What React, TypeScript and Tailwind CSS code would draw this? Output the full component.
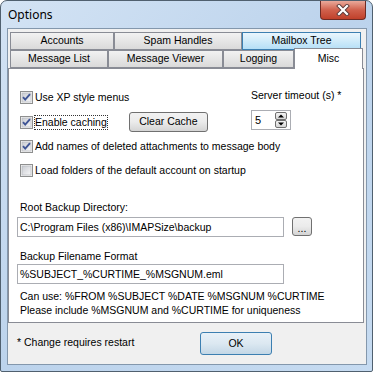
function CheckBox({ checked }: { checked: boolean }) {
  return (
    <svg width="13" height="13" viewBox="0 0 13 13" className="shrink-0">
      <defs>
        <linearGradient id="cbg" x1="0" y1="0" x2="1" y2="1">
          <stop offset="0" stopColor="#c9ccd2" />
          <stop offset="1" stopColor="#f7f7f8" />
        </linearGradient>
      </defs>
      <rect x="0.5" y="0.5" width="12" height="12" fill="#f4f4f4" stroke="#8e8f8f" />
      <rect x="2" y="2" width="9" height="9" fill="url(#cbg)" stroke="#b0b3b9" strokeWidth="0.6" />
      {checked && (
        <path d="M3 6.2 L5.2 8.6 L10 3.2" fill="none" stroke="#3f5595" strokeWidth="1.9" />
      )}
    </svg>
  );
}

function Tab({ label, w, hover }: { label: string; w: string; hover?: boolean }) {
  return (
    <div
      className={`${w} h-[18px] flex items-center justify-center border ${
        hover
          ? "border-[#3c7fb1] bg-gradient-to-b from-[#eaf6fd] to-[#b5dff6]"
          : "border-[#898c95] bg-gradient-to-b from-[#f2f2f2] to-[#dadada]"
      }`}
    >
      {label}
    </div>
  );
}

function Row({ label, checked, focus }: { label: string; checked: boolean; focus?: boolean }) {
  return (
    <div className="h-[24px] flex items-center">
      <CheckBox checked={checked} />
      <span
        className={`ml-[1px] leading-[13px] border ${
          focus ? "border-dotted border-[#333]" : "border-transparent"
        }`}
      >
        {label}
      </span>
    </div>
  );
}

export default function App() {
  return (
    <div className="w-[373px] h-[372px] bg-white font-['Liberation_Sans',Arial,sans-serif] text-[10.5px] text-black">
      <div className="w-full h-full flex flex-col rounded-t-[7px] rounded-b-[2px] border border-[#50606f] bg-gradient-to-br from-[#d3e3f4] via-[#bcd3ec] to-[#c6dbf1]">
        {/* title bar */}
        <div className="h-[27px] flex items-start pl-[7px]">
          <span className="mt-[6px] text-[12px] leading-[16px] font-['Noto_Sans',sans-serif]">Options</span>
          <div className="ml-auto mr-[6px] w-[46px] h-[19px] rounded-b-[4px] border border-t-0 border-[#6e2b24] bg-gradient-to-b from-[#e9a99b] via-[#d0604c] to-[#c0402a] flex items-center justify-center">
            <svg width="14" height="12" viewBox="0 0 14 12">
              <path d="M3 2 L11 10 M11 2 L3 10" stroke="#5a3a3a" strokeWidth="4" strokeLinecap="square" />
              <path d="M3 2 L11 10 M11 2 L3 10" stroke="#fff" strokeWidth="2.2" strokeLinecap="square" />
            </svg>
          </div>
        </div>

        {/* client area */}
        <div className="flex-1 ml-[6px] mr-[5px] mb-[6px] border border-[#8397ac] bg-[#f0f0f0] flex flex-col">
          <div className="ml-[0px] mt-[3px] w-[356px]">
            <div className="flex pl-[2px]">
              <Tab label="Accounts" w="w-[104px]" />
              <Tab label="Spam Handles" w="w-[128px]" />
              <Tab label="Mailbox Tree" w="w-[119px]" hover />
            </div>
            <div className="flex items-start pl-[2px] h-[18px]">
              <Tab label="Message List" w="w-[98px]" />
              <Tab label="Message Viewer" w="w-[115px]" />
              <Tab label="Logging" w="w-[71px]" />
              <div className="relative z-10 -mt-[2px] w-[69px] h-[21px] border border-b-0 border-[#898c95] bg-white flex justify-center pt-[3px] leading-[13px]">
                Misc
              </div>
            </div>

            {/* panel */}
            <div className="h-[255px] border border-[#898c95] bg-white pl-[11px]">
              <div className="flex mt-[16px]">
                <div className="w-[231px]">
                  <Row label="Use XP style menus" checked />
                  <div className="h-[24px] mt-[1px] flex items-center">
                    <CheckBox checked />
                    <span className="ml-[1px] leading-[13px] border border-dotted border-[#333]">Enable caching</span>
                    <div className="ml-[21px] w-[79px] h-[20px] rounded-[3px] border border-[#707070] bg-gradient-to-b from-[#f2f2f2] via-[#ebebeb] to-[#d4d4d4] flex items-center justify-center">
                      Clear Cache
                    </div>
                  </div>
                </div>
                <div className="flex flex-col">
                  <span className="mt-[3px] leading-[14px]">Server timeout (s) *</span>
                  <div className="mt-[8px] w-[40px] h-[20px] border border-[#abadb3] bg-white flex items-center pl-[3px]">
                    <span className="leading-[13px] text-[11px]">5</span>
                    <div className="ml-auto mr-[3px] flex flex-col">
                      <div className="w-[12px] h-[8px] rounded-[2px] border border-[#707070] bg-gradient-to-b from-[#f4f4f4] to-[#d6d6d6] flex items-center justify-center">
                        <svg width="6" height="4" viewBox="0 0 6 4"><path d="M0 3.5 L3 0.5 L6 3.5 Z" fill="#000" /></svg>
                      </div>
                      <div className="w-[12px] h-[8px] rounded-[2px] border border-[#707070] bg-gradient-to-b from-[#f4f4f4] to-[#d6d6d6] flex items-center justify-center">
                        <svg width="6" height="4" viewBox="0 0 6 4"><path d="M0 0.5 L3 3.5 L6 0.5 Z" fill="#000" /></svg>
                      </div>
                    </div>
                  </div>
                </div>
              </div>
              <Row label="Add names of deleted attachments to message body" checked />
              <Row label="Load folders of the default account on startup" checked={false} />

              <div className="mt-[18px] leading-[14px]">Root Backup Directory:</div>
              <div className="mt-[3px] flex items-start">
                <div className="-ml-[3px] w-[267px] h-[20px] border border-[#abadb3] bg-white pl-[2px] flex items-center leading-[13px]">
                  C:\Program Files (x86)\IMAPSize\backup
                </div>
                <div className="ml-[8px] w-[20px] h-[19px] rounded-[3px] border border-[#707070] bg-gradient-to-b from-[#f2f2f2] via-[#ebebeb] to-[#d4d4d4] flex items-end justify-center pb-[3px] leading-[8px]">
                  ...
                </div>
              </div>

              <div className="mt-[12px] leading-[14px]">Backup Filename Format</div>
              <div className="mt-[1px] -ml-[3px] w-[267px] h-[20px] border border-[#abadb3] bg-white pl-[2px] flex items-center leading-[13px]">
                %SUBJECT_%CURTIME_%MSGNUM.eml
              </div>
              <div className="mt-[5px] leading-[14px]">Can use: %FROM %SUBJECT %DATE %MSGNUM %CURTIME</div>
              <div className="leading-[14px]">Please include %MSGNUM and %CURTIME for uniqueness</div>
            </div>
          </div>

          {/* bottom */}
          <div className="flex items-start pt-[9px] pl-[9px]">
            <span className="w-[183px] mt-[3px] leading-[14px]">* Change requires restart</span>
            <div className="w-[72px] h-[23px] rounded-[3px] border border-[#3c7fb1] bg-gradient-to-b from-[#e8f1f8] via-[#dce8f1] to-[#c3d7e6] flex items-center justify-center">
              OK
            </div>
          </div>
        </div>
      </div>
    </div>
  );
}
